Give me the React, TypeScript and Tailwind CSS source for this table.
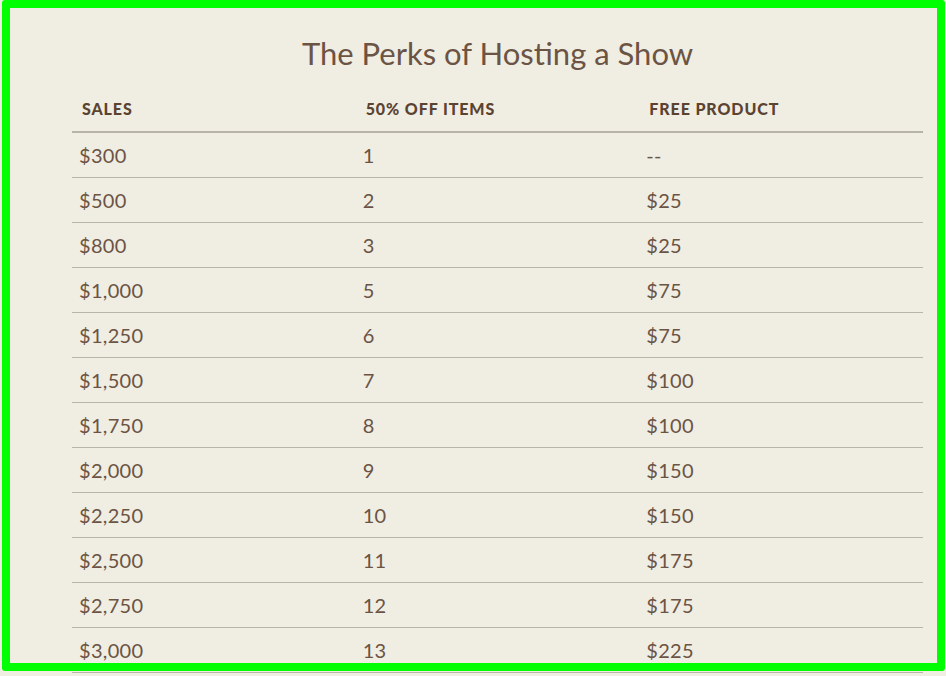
const rows = [
  ['$300', '1', '--'],
  ['$500', '2', '$25'],
  ['$800', '3', '$25'],
  ['$1,000', '5', '$75'],
  ['$1,250', '6', '$75'],
  ['$1,500', '7', '$100'],
  ['$1,750', '8', '$100'],
  ['$2,000', '9', '$150'],
  ['$2,250', '10', '$150'],
  ['$2,500', '11', '$175'],
  ['$2,750', '12', '$175'],
  ['$3,000', '13', '$225'],
];

export default function App() {
  return (
    <div className="relative h-[676px] overflow-hidden bg-[#f0ede3] font-['Lato','Liberation_Sans',sans-serif]">
      <div className="ml-[72px] w-[851px] pt-[33px]">
        <h1 className="mb-[14px] text-center text-[31px] leading-[40px] font-normal text-[#6b5444]">
          The Perks of Hosting a Show
        </h1>
        <table className="w-full table-fixed border-collapse">
          <thead>
            <tr className="border-b-2 border-[#b9b4ab]">
              {['SALES', '50% OFF ITEMS', 'FREE PRODUCT'].map((h) => (
                <th
                  key={h}
                  className="h-[45px] pl-[10px] text-left align-middle text-[16px] font-black tracking-[0.9px] text-[#5b4331]"
                >
                  {h}
                </th>
              ))}
            </tr>
          </thead>
          <tbody>
            {rows.map((r) => (
              <tr key={r[0]} className="border-b border-[#b9b4ab]">
                {r.map((c, i) => (
                  <td key={i} className="h-[45px] pl-[7px] align-middle text-[20px] tracking-[0.3px] text-[#6b5444]">
                    {c}
                  </td>
                ))}
              </tr>
            ))}
          </tbody>
        </table>
      </div>
      <div className="pointer-events-none absolute left-[2px] top-0 h-[671px] w-[943px] rounded-[3px] border-8 border-[#00ff00]" />
    </div>
  );
}
